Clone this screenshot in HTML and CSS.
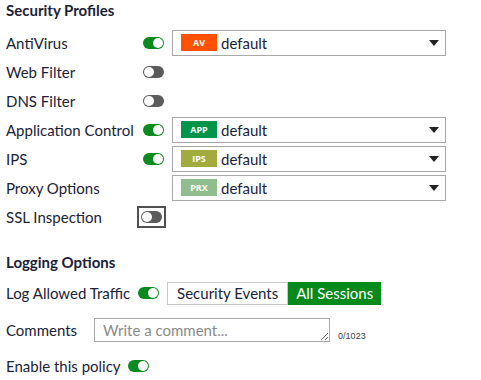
FILE: index.html
```html
<!DOCTYPE html>
<html>
<head>
  <title>Policy</title>
  <link rel="stylesheet" href="styles.css">
</head>
<body>
<div class="section">
  <h2>Security Profiles</h2>

  <div class="row">
    <span class="label">AntiVirus</span>
    <span class="toggle on"></span>
    <div class="select">
      <span class="badge av">AV</span>
      <span class="value">default</span>
      <span class="caret"></span>
    </div>
  </div>
  <div class="row">
    <span class="label">Web Filter</span>
    <span class="toggle"></span>
  </div>
  <div class="row">
    <span class="label">DNS Filter</span>
    <span class="toggle"></span>
  </div>
  <div class="row">
    <span class="label">Application Control</span>
    <span class="toggle on"></span>
    <div class="select">
      <span class="badge app">APP</span>
      <span class="value">default</span>
      <span class="caret"></span>
    </div>
  </div>
  <div class="row">
    <span class="label">IPS</span>
    <span class="toggle on"></span>
    <div class="select">
      <span class="badge ips">IPS</span>
      <span class="value">default</span>
      <span class="caret"></span>
    </div>
  </div>
  <div class="row">
    <span class="label">Proxy Options</span>
    <span class="toggle hidden"></span>
    <div class="select">
      <span class="badge prx">PRX</span>
      <span class="value">default</span>
      <span class="caret"></span>
    </div>
  </div>
  <div class="row">
    <span class="label">SSL Inspection</span>
    <span class="focus-box"><span class="toggle"></span></span>
  </div>
</div>

<div class="section logging">
  <h2>Logging Options</h2>

  <div class="line log-line">
    <span class="text">Log Allowed Traffic</span>
    <span class="toggle on"></span>
    <div class="segmented">
      <span class="seg">Security Events</span>
      <span class="seg active">All Sessions</span>
    </div>
  </div>

  <div class="line comment-line">
    <span class="text">Comments</span>
    <textarea class="comment" placeholder="Write a comment..."></textarea>
    <span class="counter">0/1023</span>
  </div>

  <div class="line enable-line">
    <span class="text">Enable this policy</span>
    <span class="toggle on"></span>
  </div>
</div>
</body>
</html>
```

FILE: styles.css
```css
/* Page base */
* {
  box-sizing: border-box;
}

body {
  margin: 0;
  padding: 0 6px;
  font-family: Lato, "Open Sans", sans-serif;
  font-size: 15px;
  color: #1b2238;
  background-color: #ffffff;
}

h2 {
  margin: 0;
  font-size: 15px;
  font-weight: bold;
  line-height: 20px;
}

.section h2 {
  margin-bottom: 8px;
}

/* Security profile rows */
.row {
  display: flex;
  align-items: center;
  height: 29px;
}

.label {
  width: 137px;
  flex-shrink: 0;
}

/* Toggle switch */
.toggle {
  display: inline-block;
  position: relative;
  width: 21px;
  height: 12px;
  border-radius: 6px;
  background-color: #5c5c5c;
  flex-shrink: 0;
}

.toggle::after {
  content: "";
  position: absolute;
  top: 1px;
  left: 1px;
  width: 10px;
  height: 10px;
  border-radius: 50%;
  background-color: #ffffff;
}

.toggle.on {
  background-color: #0a8a1f;
}

.toggle.on::after {
  left: 10px;
}

.toggle.hidden {
  visibility: hidden;
}

.focus-box {
  display: inline-flex;
  align-items: center;
  justify-content: center;
  width: 29px;
  height: 22px;
  border: 2px solid #505050;
  margin-left: -6px;
  margin-right: -2px;
}

/* Profile dropdown */
.select {
  display: flex;
  align-items: center;
  width: 274px;
  height: 26px;
  margin-left: 8px;
  border: 1px solid #a8a8a8;
  padding: 0 6px 0 8px;
}

.badge {
  display: inline-block;
  width: 36px;
  height: 17px;
  line-height: 17px;
  text-align: center;
  color: #ffffff;
  font-size: 9px;
  font-weight: bold;
  font-family: "Open Sans", sans-serif;
}

.badge.av { background-color: #ff5100; }
.badge.app { background-color: #00954a; }
.badge.ips { background-color: #a2ab3e; }
.badge.prx { background-color: #8fbd8b; }

.value {
  margin-left: 4px;
  flex: 1;
}

.caret {
  width: 0;
  height: 0;
  border-left: 5px solid transparent;
  border-right: 5px solid transparent;
  border-top: 6px solid #222222;
}

/* Logging options */
.logging {
  margin-top: 21px;
}

.line {
  display: flex;
  align-items: center;
}

.log-line {
  height: 26px;
  margin-top: 1px;
}

.log-line .toggle {
  margin-left: 8px;
}

.segmented {
  display: flex;
  margin-left: 8px;
}

.seg {
  border: 1px solid #c8c8c8;
  height: 23px;
  line-height: 21px;
  padding: 0 9px;
}

.seg.active {
  background-color: #078a1c;
  border-color: #078a1c;
  color: #ffffff;
  padding: 0 7px;
}

.comment-line {
  margin-top: 11px;
  height: 26px;
}

.comment {
  margin-left: 17px;
  width: 236px;
  height: 24px;
  border: 1px solid #a8a8a8;
  padding: 2px 8px;
  font-family: Lato, sans-serif;
  font-size: 15px;
  line-height: 18px;
  color: #1b2238;
  resize: both;
  overflow: hidden;
}

.comment::placeholder {
  color: #8a8a8a;
}

.counter {
  align-self: flex-end;
  margin-left: 8px;
  font-family: "Liberation Sans", sans-serif;
  font-size: 9px;
  color: #444444;
  margin-bottom: 2px;
}

.enable-line {
  margin-top: 10px;
  height: 26px;
}

.enable-line .toggle {
  margin-left: 7px;
}
```
